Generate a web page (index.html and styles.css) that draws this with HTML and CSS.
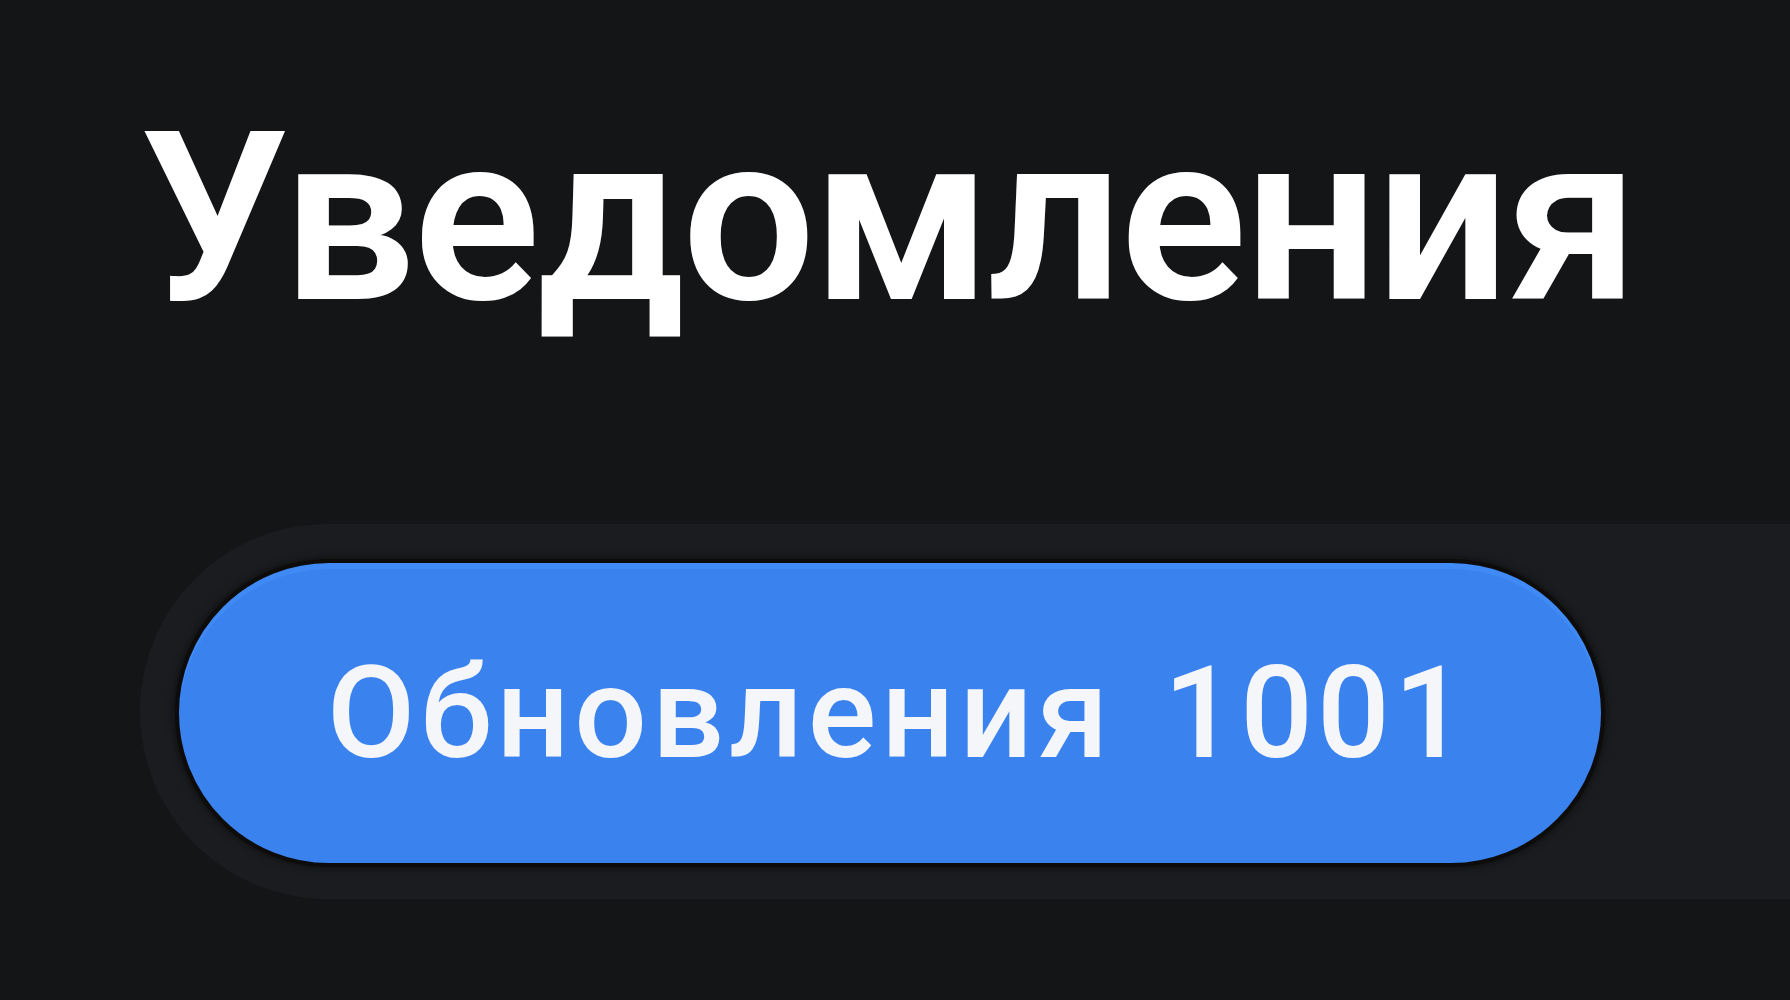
FILE: index.html
```html
<!DOCTYPE html>
<html lang="ru">
<head>
  <meta charset="UTF-8">
  <meta name="viewport" content="width=device-width, initial-scale=1.0">
  <title>Уведомления</title>
  <link rel="stylesheet" href="styles.css">
</head>
<body>
  <div class="page">
    <!-- Header -->
    <h1 class="title">Уведомления</h1>

    <!-- Tabs -->
    <div class="tabs">
      <button class="tab active">
        <span class="tab-label">Обновления</span>
        <span class="tab-count">1001</span>
      </button>
    </div>
  </div>
</body>
</html>
```

FILE: styles.css
```css
body {
  margin: 0;
  padding: 0;
  font-family: Roboto, "Noto Sans", sans-serif;
  background: #141517;
  color: #fff;
  overflow: hidden;
}

.page {
  padding: 101px 0 0 140px;
}

.title {
  margin: 0;
  font-size: 236px;
  font-weight: 600;
  line-height: 1;
  letter-spacing: -2.8px;
  color: #fff;
}

.tabs {
  display: flex;
  margin-top: 187px;
  padding: 35px 0 32px 35px;
  background: #1a1c1f;
  border-radius: 190px 0 0 190px;
}

.tab {
  display: flex;
  align-items: center;
  gap: 50px;
  height: 308px;
  padding: 0 130px 0 148px;
  font-family: inherit;
  font-size: 128px;
  font-weight: 500;
  letter-spacing: 4px;
  color: #f4f6fa;
  background: #3a82ee;
  border: 4px solid #0e0c0a;
  border-radius: 160px;
  box-shadow: 0 0 8px rgba(0, 0, 0, 0.6), inset 0 6px 0 #3f8af5;
  cursor: pointer;
}

.tab-label,
.tab-count {
  line-height: 1;
}

.tab-label {
  letter-spacing: 5px;
}
```
